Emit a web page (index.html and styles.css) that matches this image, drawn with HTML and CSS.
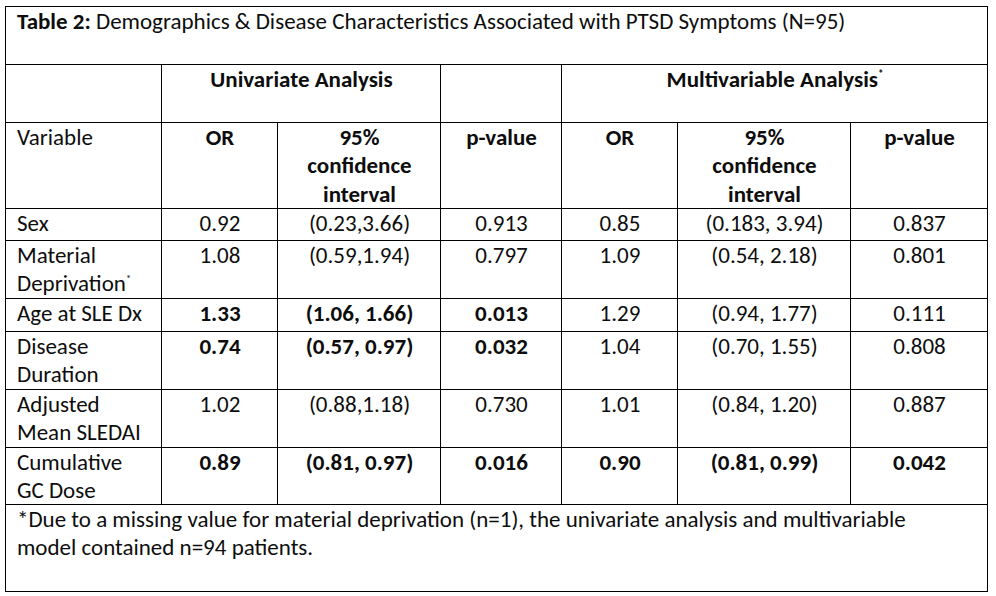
FILE: index.html
```html
<!DOCTYPE html>
<html lang="en">
<head>
<meta charset="utf-8">
<title>Table 2</title>
<link rel="stylesheet" href="styles.css">
</head>
<body>
<table class="tbl">
  <colgroup>
    <col class="c1"><col class="c2"><col class="c3"><col class="c4"><col class="c5"><col class="c6"><col class="c7">
  </colgroup>
  <tr class="r-title">
    <td colspan="7" class="left"><b>Table 2:</b> Demographics &amp; Disease Characteristics Associated with PTSD Symptoms (N=95)</td>
  </tr>
  <tr class="r-group">
    <td></td>
    <td colspan="2" class="b">Univariate Analysis</td>
    <td></td>
    <td colspan="3" class="b">Multivariable Analysis<sup>*</sup></td>
  </tr>
  <tr class="r-head">
    <td class="left">Variable</td>
    <td class="b">OR</td>
    <td class="b">95%<br>confidence<br>interval</td>
    <td class="b">p-value</td>
    <td class="b">OR</td>
    <td class="b">95%<br>confidence<br>interval</td>
    <td class="b">p-value</td>
  </tr>
  <tr class="r-sex">
    <td class="left">Sex</td>
    <td>0.92</td><td>(0.23,3.66)</td><td>0.913</td>
    <td>0.85</td><td>(0.183, 3.94)</td><td>0.837</td>
  </tr>
  <tr class="r-mat">
    <td class="left">Material<br>Deprivation<sup>*</sup></td>
    <td>1.08</td><td>(0.59,1.94)</td><td>0.797</td>
    <td>1.09</td><td>(0.54, 2.18)</td><td>0.801</td>
  </tr>
  <tr class="r-age">
    <td class="left">Age at SLE Dx</td>
    <td class="b">1.33</td><td class="b">(1.06, 1.66)</td><td class="b">0.013</td>
    <td>1.29</td><td>(0.94, 1.77)</td><td>0.111</td>
  </tr>
  <tr class="r-dis">
    <td class="left">Disease<br>Duration</td>
    <td class="b">0.74</td><td class="b">(0.57, 0.97)</td><td class="b">0.032</td>
    <td>1.04</td><td>(0.70, 1.55)</td><td>0.808</td>
  </tr>
  <tr class="r-adj">
    <td class="left">Adjusted<br>Mean SLEDAI</td>
    <td>1.02</td><td>(0.88,1.18)</td><td>0.730</td>
    <td>1.01</td><td>(0.84, 1.20)</td><td>0.887</td>
  </tr>
  <tr class="r-cum">
    <td class="left">Cumulative<br>GC Dose</td>
    <td class="b">0.89</td><td class="b">(0.81, 0.97)</td><td class="b">0.016</td>
    <td class="b">0.90</td><td class="b">(0.81, 0.99)</td><td class="b">0.042</td>
  </tr>
  <tr class="r-foot">
    <td colspan="7" class="left">*Due to a missing value for material deprivation (n=1), the univariate analysis and multivariable<br>model contained n=94 patients.</td>
  </tr>
</table>
</body>
</html>
```
FILE: styles.css
```css
html, body {
  margin: 0;
  padding: 0;
  background: #ffffff;
}

body {
  padding: 6px 0 0 5px;
  font-family: "Carlito", "Lato", "Liberation Sans", sans-serif;
  font-size: 23px;
  color: #0d0d0d;
}

.tbl {
  border-collapse: collapse;
  table-layout: fixed;
  width: 982px;
}

.c1 { width: 156px; }
.c2 { width: 116px; }
.c3 { width: 163px; }
.c4 { width: 121px; }
.c5 { width: 116px; }
.c6 { width: 173px; }
.c7 { width: 137px; }

.tbl td {
  border: 1px solid #000000;
  padding: 0 10px 0 11px;
  line-height: 28.3px;
  text-align: center;
  vertical-align: top;
  white-space: nowrap;
}

.tbl td.left {
  text-align: left;
}

.tbl td.b,
.tbl b {
  font-weight: 700;
}

.tbl sup {
  font-size: 11px;
  line-height: 0;
  vertical-align: 9px;
}

.r-title td { height: 57px; }
.r-group td { height: 57px; }
.r-head td { height: 85px; }
.r-sex td { height: 31px; }
.r-mat td { height: 57px; }
.r-age td { height: 32px; }
.r-dis td { height: 56px; }
.r-adj td { height: 57px; }
.r-cum td { height: 53px; }
.r-foot td { height: 86px; }
```
